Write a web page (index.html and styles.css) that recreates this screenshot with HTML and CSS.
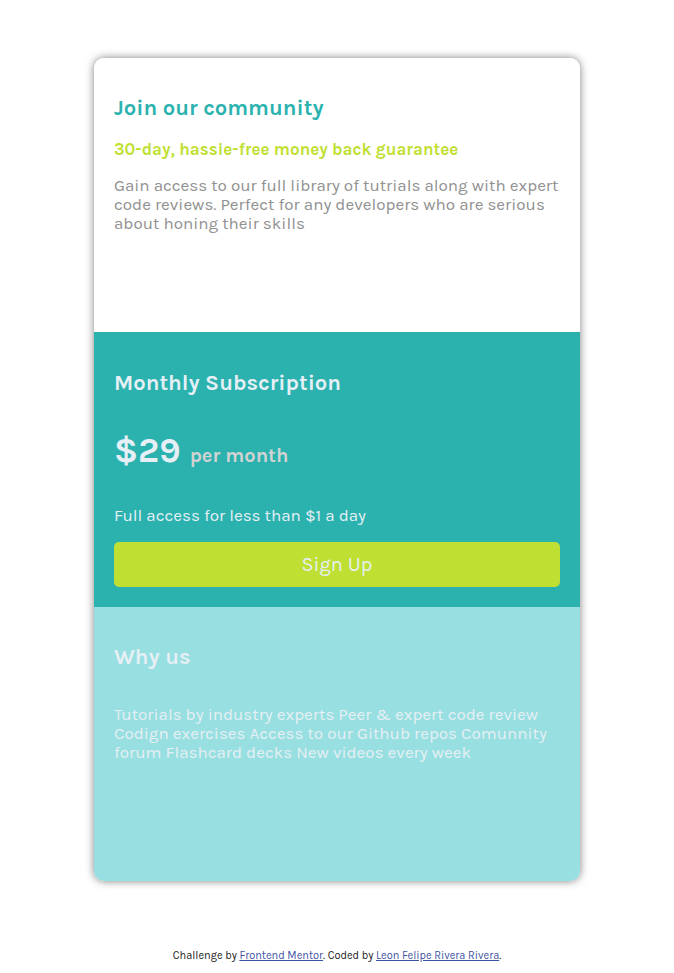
FILE: index.html
```html
<!DOCTYPE html>
<html lang="en">
<head>
<meta charset="utf-8">
<meta name="viewport" content="width=device-width, initial-scale=1">
<title>Single price grid component</title>
<link rel="stylesheet" href="styles.css">
</head>
<body>
<main class="card">
  <section class="panel community">
    <h1 class="title">Join our community</h1>
    <h2 class="guarantee">30-day, hassie-free money back guarantee</h2>
    <p class="text">Gain access to our full library of tutrials along with expert code reviews. Perfect for any developers who are serious about honing their skills</p>
  </section>
  <section class="panel subscription">
    <h2 class="title">Monthly Subscription</h2>
    <p class="price"><span class="amount">$29</span><span class="period">per month</span></p>
    <p class="text">Full access for less than $1 a day</p>
    <button class="signup" type="button">Sign Up</button>
  </section>
  <section class="panel why">
    <h2 class="title">Why us</h2>
    <p class="text">Tutorials by industry experts Peer &amp; expert code review Codign exercises Access to our Github repos Comunnity forum Flashcard decks New videos every week</p>
  </section>
</main>
<footer class="attribution">Challenge by <a href="#">Frontend Mentor</a>. Coded by <a href="#">Leon Felipe Rivera Rivera</a>.</footer>
</body>
</html>
```

FILE: styles.css
```css
* {
  box-sizing: border-box;
}

body {
  margin: 0;
  padding: 58px 94px 8px;
  background: #fff;
  font-family: Karla, "Noto Sans", sans-serif;
}

.card {
  border-radius: 10px;
  overflow: hidden;
  box-shadow: 0 0 8px rgba(0, 0, 0, 0.5);
}

.panel {
  display: flex;
  flex-direction: column;
  min-height: 274px;
  padding: 36px 20px 20px;
}

.title,
.guarantee,
.text,
.price {
  margin: 0;
}

.title {
  font-size: 22px;
  line-height: 28px;
}

.text {
  font-size: 17px;
  line-height: 19px;
}

.community {
  background: #fff;
  color: #919191;
}

.community .title {
  color: #2bb2af;
}

.guarantee {
  margin: 18px 0 17px;
  color: #bfdf32;
  font-size: 17px;
  line-height: 19px;
}

.subscription {
  min-height: 275px;
  padding-top: 37px;
  background: #2bb2af;
  color: #e6eff5;
}

.price {
  display: flex;
  align-items: baseline;
  gap: 9px;
  margin: 31px 0 27px;
  font-weight: 700;
  line-height: 46px;
}

.amount {
  font-size: 35px;
}

.period {
  color: #d3d3d3;
  font-size: 20px;
}

.signup {
  height: 45px;
  margin-top: auto;
  border: 0;
  border-radius: 5px;
  background: #bfdf32;
  color: #e6eff5;
  font: inherit;
  font-size: 20px;
}

.why {
  background: #97dfe0;
  color: #e6eff5;
}

.why .text {
  margin-top: 34px;
}

.attribution {
  margin-top: 68px;
  color: #1a1a1a;
  font-size: 11px;
  line-height: 13px;
  text-align: center;
}

.attribution a {
  color: #3e52a3;
}
```
